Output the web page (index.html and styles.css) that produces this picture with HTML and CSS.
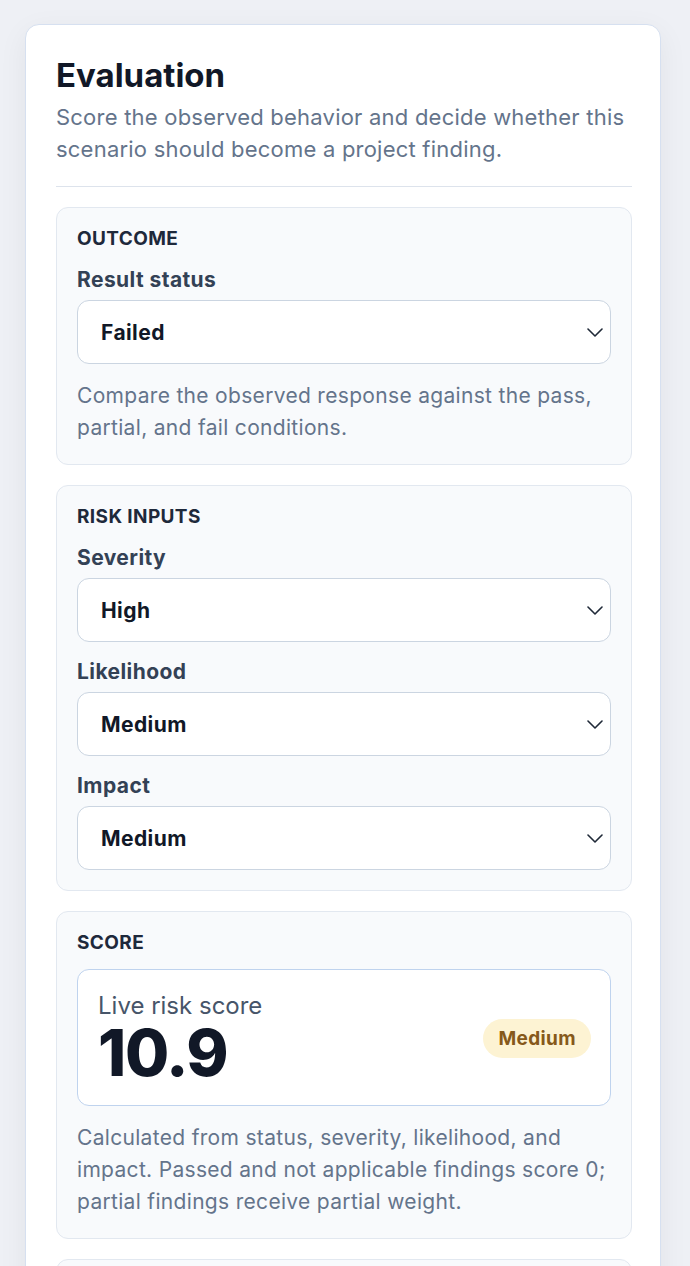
FILE: index.html
```html
<!DOCTYPE html>
<html lang="en">
<head>
    <meta charset="UTF-8">
    <meta name="viewport" content="width=device-width, initial-scale=1.0">
    <title>Evaluation</title>
    <link rel="stylesheet" href="styles.css">
</head>
<body>
<div class="card">
    <div class="card-header">
        <h1>Evaluation</h1>
        <p class="subtitle">Score the observed behavior and decide whether this scenario should become a project finding.</p>
    </div>

    <div class="section">
        <div class="section-title">Outcome</div>
        <div class="field">
            <label for="status">Result status</label>
            <div class="select-wrap">
                <select id="status">
                    <option>Passed</option>
                    <option>Partial</option>
                    <option selected>Failed</option>
                    <option>Not applicable</option>
                </select>
                <svg class="chevron" viewBox="0 0 16 9" width="16" height="9"><path d="M1 1l7 7 7-7" fill="none" stroke="currentColor" stroke-width="1.6" stroke-linecap="round" stroke-linejoin="round"/></svg>
            </div>
        </div>
        <p class="help">Compare the observed response against the pass, partial, and fail conditions.</p>
    </div>

    <div class="section">
        <div class="section-title">Risk inputs</div>
        <div class="field">
            <label for="severity">Severity</label>
            <div class="select-wrap">
                <select id="severity">
                    <option>Low</option>
                    <option>Medium</option>
                    <option selected>High</option>
                    <option>Critical</option>
                </select>
                <svg class="chevron" viewBox="0 0 16 9" width="16" height="9"><path d="M1 1l7 7 7-7" fill="none" stroke="currentColor" stroke-width="1.6" stroke-linecap="round" stroke-linejoin="round"/></svg>
            </div>
        </div>
        <div class="field">
            <label for="likelihood">Likelihood</label>
            <div class="select-wrap">
                <select id="likelihood">
                    <option>Low</option>
                    <option selected>Medium</option>
                    <option>High</option>
                </select>
                <svg class="chevron" viewBox="0 0 16 9" width="16" height="9"><path d="M1 1l7 7 7-7" fill="none" stroke="currentColor" stroke-width="1.6" stroke-linecap="round" stroke-linejoin="round"/></svg>
            </div>
        </div>
        <div class="field">
            <label for="impact">Impact</label>
            <div class="select-wrap">
                <select id="impact">
                    <option>Low</option>
                    <option selected>Medium</option>
                    <option>High</option>
                </select>
                <svg class="chevron" viewBox="0 0 16 9" width="16" height="9"><path d="M1 1l7 7 7-7" fill="none" stroke="currentColor" stroke-width="1.6" stroke-linecap="round" stroke-linejoin="round"/></svg>
            </div>
        </div>
    </div>

    <div class="section">
        <div class="section-title">Score</div>
        <div class="score-box">
            <div>
                <div class="score-label">Live risk score</div>
                <div class="score-value">10.9</div>
            </div>
            <span class="badge">Medium</span>
        </div>
        <p class="help">Calculated from status, severity, likelihood, and impact. Passed and not applicable findings score 0; partial findings receive partial weight.</p>
    </div>

    <div class="section">
        <div class="section-title">Decision</div>
        <p class="help">Promote this scenario to a project finding when the result is failed or partial.</p>
    </div>
</div>
</body>
</html>
```

FILE: styles.css
```css
body {
    margin: 0;
    padding: 24px 29px 40px 25px;
    font-family: Inter, "Noto Sans", sans-serif;
    background-color: #eef0f5;
    color: #111827;
}

.card {
    background-color: #ffffff;
    border: 1px solid #d6e0f0;
    border-radius: 14px;
    padding: 30px 28px 30px 30px;
    box-shadow: 0 8px 30px rgba(15, 23, 42, 0.06);
    display: flex;
    flex-direction: column;
    gap: 20px;
}

.card-header {
    padding-bottom: 21px;
    border-bottom: 1px solid #dde3ec;
}

.card-header h1 {
    margin: 0;
    font-size: 33px;
    line-height: 40px;
    font-weight: 700;
    color: #111827;
}

.subtitle {
    margin: 6px 0 0;
    font-size: 22px;
    line-height: 32px;
    letter-spacing: 0.01em;
    color: #64748b;
}

.section {
    background-color: #f8fafc;
    border: 1px solid #e2e8f0;
    border-radius: 12px;
    padding: 20px;
    display: flex;
    flex-direction: column;
    gap: 15px;
}

.section-title {
    font-size: 19px;
    line-height: 22px;
    font-weight: 700;
    text-transform: uppercase;
    letter-spacing: 0.02em;
    color: #1e293b;
}

.field {
    display: flex;
    flex-direction: column;
    gap: 5px;
}

.field label {
    font-size: 21px;
    line-height: 30px;
    font-weight: 700;
    letter-spacing: 0.02em;
    color: #334155;
}

.select-wrap {
    position: relative;
    color: #1f2937;
}

.select-wrap select {
    appearance: none;
    -webkit-appearance: none;
    width: 100%;
    height: 64px;
    padding: 0 50px 0 23px;
    font-family: inherit;
    font-size: 21px;
    font-weight: 700;
    letter-spacing: 0.02em;
    color: #111827;
    background-color: #ffffff;
    border: 1px solid #cbd5e1;
    border-radius: 12px;
    outline: none;
}

.chevron {
    position: absolute;
    right: 8px;
    top: 28px;
    pointer-events: none;
}

.help {
    margin: 1px 0 0;
    font-size: 21px;
    line-height: 32px;
    letter-spacing: 0.015em;
    color: #64748b;
}

.score-box {
    display: flex;
    justify-content: space-between;
    align-items: center;
    background-color: #ffffff;
    border: 1px solid #bfd3ee;
    border-radius: 12px;
    padding: 21px 19px 20px 20px;
}

.score-label {
    font-size: 24px;
    line-height: 30px;
    color: #475569;
}

.score-value {
    font-size: 64px;
    line-height: 64px;
    font-weight: 800;
    letter-spacing: -0.02em;
    color: #111827;
}

.badge {
    background-color: #fdf3d3;
    color: #86591a;
    font-size: 19px;
    font-weight: 700;
    line-height: 23px;
    letter-spacing: 0.02em;
    padding: 8px 15px;
    border-radius: 999px;
}
```
